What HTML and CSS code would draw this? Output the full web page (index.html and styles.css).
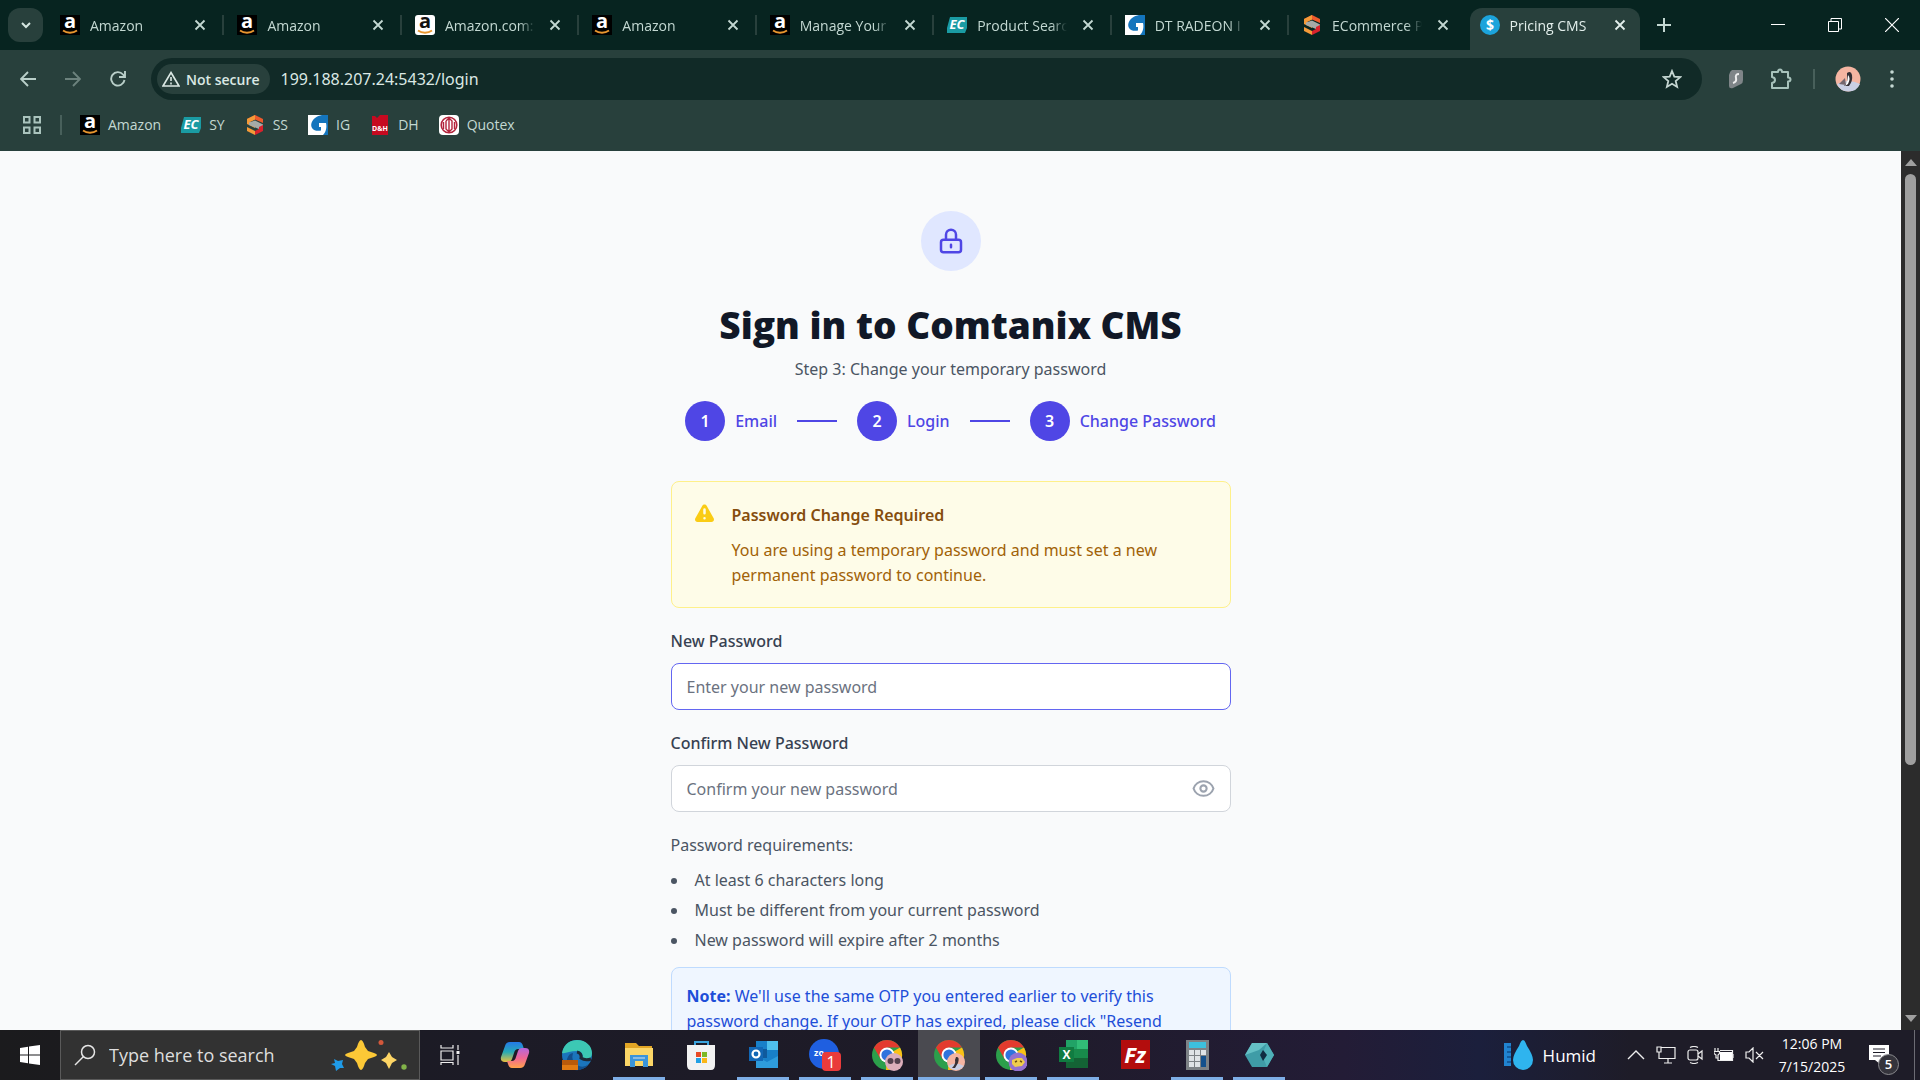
FILE: index.html
```html
<!DOCTYPE html>
<html lang="en">
  <head>
    <meta charset="UTF-8" />
    <meta name="viewport" content="width=device-width, initial-scale=1.0" />
    <title>Pricing CMS</title>
    <link rel="stylesheet" href="styles.css">
  </head>

  <body>
    <!-- shared icons -->
    <svg class="sprite" aria-hidden="true">
      <symbol id="amazon" viewBox="0 0 20 20">
        <rect width="20" height="20" fill="#000" />
        <text x="10" y="13" class="glyph" font-size="20" fill="#fff">a</text>
        <path d="M3 15.500c4 3 10 3 14 0" fill="none" stroke="#e8962e" stroke-width="1.800" />
      </symbol>
      <symbol id="amazon-light" viewBox="0 0 20 20">
        <rect width="20" height="20" rx="3" fill="#fff" />
        <text x="10" y="13" class="glyph" font-size="20" fill="#111">a</text>
        <path d="M3 15.500c4 3 10 3 14 0" fill="none" stroke="#e8962e" stroke-width="1.800" />
      </symbol>
      <symbol id="ec" viewBox="0 0 20 20">
        <path d="M3 2h17v11l-2 5H0V13z" fill="#1a9ba3" />
        <text x="10" y="14" class="glyph" font-size="13" font-style="italic" fill="#fff">EC</text>
      </symbol>
      <symbol id="ss" viewBox="0 0 20 20">
        <path d="M10 0l8 4v4l-8-3.500L2 8V4z" fill="#ee5a2c" />
        <path d="M2 4l8-4v4.500L5 7l5 2.500V13L2 9z" fill="#f59a38" />
        <path d="M4 7.500l6-2 8 4v3l-4 1.500L4 10z" fill="#a5aaa8" />
        <path d="M2 12l8 4v4l-8-4z" fill="#f59a38" />
        <path d="M18 10v6l-8 4v-4l4-2v-2z" fill="#d9222c" />
      </symbol>
      <symbol id="ig" viewBox="0 0 20 20">
        <rect width="20" height="20" fill="#fff" />
        <path d="M20 0v20h-5c3-3 4-8 3-12h-7v4h2v3.500C6 17 2 13 3.500 8 5 3.500 9 1 14 0z" fill="#1475bd" />
      </symbol>
      <symbol id="close" viewBox="0 0 16 16">
        <path d="M3.500 3.500l9 9M12.500 3.500l-9 9" fill="none" stroke="currentColor" stroke-width="1.800" />
      </symbol>
      <symbol id="chrome" viewBox="0 0 32 32">
        <circle cx="16" cy="16" r="15" fill="#2c9f4b" />
        <path d="M16 16L29 8.500A15 15 0 0 1 15 31z" fill="#fbc116" />
        <path d="M3 8.500A15 15 0 0 1 29 8.500H16V16L9.500 20z" fill="#e33b2e" />
        <circle cx="16" cy="16" r="7.500" fill="#fff" />
        <circle cx="16" cy="16" r="5.600" fill="#2f73dd" />
      </symbol>
    </svg>

    <header class="browser">
      <div class="tabstrip">
        <button class="tab-search" aria-label="Search tabs">
          <svg width="12" height="12" viewBox="0 0 12 12"><path d="M2 4l4 4 4-4" fill="none" stroke="#d5e6e1" stroke-width="2" /></svg>
        </button>
        <nav class="tabs" aria-label="Tabs">
          <div class="tab"><svg class="fav"><use href="#amazon" /></svg><span class="tab-title">Amazon</span><button class="tab-close" aria-label="Close tab"><svg><use href="#close" /></svg></button></div>
          <div class="tab"><svg class="fav"><use href="#amazon" /></svg><span class="tab-title">Amazon</span><button class="tab-close" aria-label="Close tab"><svg><use href="#close" /></svg></button></div>
          <div class="tab"><svg class="fav"><use href="#amazon-light" /></svg><span class="tab-title">Amazon.com:</span><button class="tab-close" aria-label="Close tab"><svg><use href="#close" /></svg></button></div>
          <div class="tab"><svg class="fav"><use href="#amazon" /></svg><span class="tab-title">Amazon</span><button class="tab-close" aria-label="Close tab"><svg><use href="#close" /></svg></button></div>
          <div class="tab"><svg class="fav"><use href="#amazon" /></svg><span class="tab-title">Manage Your</span><button class="tab-close" aria-label="Close tab"><svg><use href="#close" /></svg></button></div>
          <div class="tab"><svg class="fav"><use href="#ec" /></svg><span class="tab-title">Product Searc</span><button class="tab-close" aria-label="Close tab"><svg><use href="#close" /></svg></button></div>
          <div class="tab"><svg class="fav"><use href="#ig" /></svg><span class="tab-title">DT RADEON I</span><button class="tab-close" aria-label="Close tab"><svg><use href="#close" /></svg></button></div>
          <div class="tab before-active"><svg class="fav"><use href="#ss" /></svg><span class="tab-title">ECommerce P</span><button class="tab-close" aria-label="Close tab"><svg><use href="#close" /></svg></button></div>
          <div class="tab active">
            <svg class="fav" viewBox="0 0 20 20"><circle cx="10" cy="10" r="10" fill="#1ca4dc" /><text x="10" y="15" class="glyph" font-size="14" fill="#fff">$</text></svg>
            <span class="tab-title">Pricing CMS</span><button class="tab-close" aria-label="Close tab"><svg><use href="#close" /></svg></button>
          </div>
        </nav>
        <button class="new-tab" aria-label="New tab">
          <svg width="14" height="14" viewBox="0 0 14 14"><path d="M7 0v14M0 7h14" stroke="#c3d8d2" stroke-width="2" /></svg>
        </button>
        <div class="window-buttons">
          <button aria-label="Minimize"><svg width="14" height="14" viewBox="0 0 14 14"><path d="M0 6.500h14" stroke="#fff" /></svg></button>
          <button aria-label="Restore"><svg width="14" height="14" viewBox="0 0 14 14"><path d="M.5 3.500h10v10H.5zM3 3.500V.5h10.500v10.500H11" fill="none" stroke="#fff" /></svg></button>
          <button aria-label="Close"><svg width="14" height="14" viewBox="0 0 14 14"><path d="M0 0l14 14M14 0L0 14" stroke="#fff" stroke-width="1.200" /></svg></button>
        </div>
      </div>

      <div class="toolbar">
        <button class="tool" aria-label="Back"><svg width="16" height="16" viewBox="0 0 16 16"><path d="M16 8H2M8 1L1 8l7 7" fill="none" stroke="#b9cfc9" stroke-width="1.900" /></svg></button>
        <button class="tool" aria-label="Forward"><svg width="16" height="16" viewBox="0 0 16 16"><path d="M0 8h14M8 1l7 7-7 7" fill="none" stroke="#6c827d" stroke-width="1.900" /></svg></button>
        <button class="tool" aria-label="Reload"><svg width="16" height="16" viewBox="0 0 16 16"><path d="M14.500 9A6.700 6.700 0 1 1 13 3.500L15 6M15 0v6H9" fill="none" stroke="#b9cfc9" stroke-width="1.900" /></svg></button>
        <div class="address">
          <button class="chip">
            <svg width="18" height="16" viewBox="0 0 18 16"><path d="M9 1.500L17 15H1z" fill="none" stroke="#dbe8e4" stroke-width="1.600" /><path d="M9 6v4M9 11.500v2" stroke="#dbe8e4" stroke-width="1.600" /></svg>
            Not secure
          </button>
          <input class="url" type="text" aria-label="Address" value="199.188.207.24:5432/login">
          <button class="star" aria-label="Bookmark this page"><svg width="20" height="20" viewBox="0 0 20 20"><path d="M10 2l2.300 5.600 6 .5-4.600 3.900 1.400 5.900L10 14.800l-5.100 3.100L6.300 12 1.700 8.100l6-.5z" fill="none" stroke="#c5d6d2" stroke-width="1.800" /></svg></button>
        </div>
        <div class="extensions">
          <button class="tool" aria-label="Extension"><svg width="16" height="20" viewBox="0 0 16 20"><path d="M4 1h9q2 0 2 2v8q0 3-2 4l-8 4q-4 1-4-2V6q1-4 3-5z" fill="#7f8588" /><path d="M11 5q-4 0-3 4 1 4-3 5" fill="none" stroke="#eee" stroke-width="2" /></svg></button>
          <button class="tool" aria-label="Extensions"><svg width="22" height="22" viewBox="0 0 22 22"><path d="M2 4h6q0-2.500 2-2.500T12 4h6v5.500q2.500 0 2.500 2T18 13.500V20H2v-5q3-.5 3-3T2 9z" fill="none" stroke="#a8c3bc" stroke-width="2" stroke-linejoin="round" /></svg></button>
          <span class="divider"></span>
          <button class="tool" aria-label="Profile"><svg width="26" height="26" viewBox="0 0 26 26"><circle cx="13" cy="13" r="12.500" fill="#f5b5a2" /><path d="M2 18q11-6 23 0a12.500 12.500 0 0 1-23 0z" fill="#c9cfe4" /><path d="M12 7q4-3 5 2 1 6-3 11H9q4-3 3-7z" fill="#332f35" /><path d="M13 9q3 3 0 9l-3 2q3-5 3-11z" fill="#fff" /><path d="M4 18l6-6 1 7z" fill="#74666d" /></svg></button>
          <button class="tool" aria-label="Menu"><svg width="6" height="18" viewBox="0 0 6 18"><g fill="#c5d8d3"><circle cx="3" cy="2" r="1.800" /><circle cx="3" cy="9" r="1.800" /><circle cx="3" cy="16" r="1.800" /></g></svg></button>
        </div>
      </div>

      <nav class="bookmarks" aria-label="Bookmarks">
        <svg width="18" height="18" viewBox="0 0 18 18"><path d="M1 1h5.500v5.500H1zM11.500 1H17v5.500h-5.500zM1 11.500h5.500V17H1zM11.500 11.500H17V17h-5.500z" fill="none" stroke="#aac4bd" stroke-width="2" /></svg>
        <span class="divider"></span>
        <a href="#"><svg class="fav"><use href="#amazon" /></svg>Amazon</a>
        <a href="#"><svg class="fav"><use href="#ec" /></svg>SY</a>
        <a href="#"><svg class="fav"><use href="#ss" /></svg>SS</a>
        <a href="#"><svg class="fav"><use href="#ig" /></svg>IG</a>
        <a href="#"><svg class="fav" viewBox="0 0 20 20"><path d="M2 1h3l2 2 3-3h8v20H2z" fill="#c60a20" /><text x="10" y="16" class="glyph" font-size="7" fill="#fff">D&amp;H</text></svg>DH</a>
        <a href="#"><svg class="fav" viewBox="0 0 20 20"><rect width="20" height="20" rx="4" fill="#fff" /><circle cx="10" cy="10" r="7.800" fill="none" stroke="#b3243c" stroke-width="1.600" /><path d="M10 2v16M7 6v8l3 3 3-3V6l-3-3-3 3M4.500 7v7M15.500 7v7" fill="none" stroke="#b3243c" stroke-width="1.400" /></svg>Quotex</a>
      </nav>
    </header>

    <div class="viewport">
      <main class="page">
        <form class="login">
          <div class="lock">
            <svg width="30" height="30" viewBox="0 0 24 24" fill="none" stroke="#4f46e5" stroke-width="2" stroke-linecap="round" stroke-linejoin="round"><path d="M12 15v2m-6 4h12a2 2 0 002-2v-6a2 2 0 00-2-2H6a2 2 0 00-2 2v6a2 2 0 002 2zm10-10V7a4 4 0 00-8 0v4h8z" /></svg>
          </div>
          <h1>Sign in to Comtanix CMS</h1>
          <p class="subtitle">Step 3: Change your temporary password</p>

          <ol class="steps">
            <li><span class="num">1</span>Email</li>
            <li><span class="num">2</span>Login</li>
            <li><span class="num">3</span>Change Password</li>
          </ol>

          <section class="alert">
            <svg width="25" height="25" viewBox="0 0 20 20" fill="#facc15"><path fill-rule="evenodd" d="M8.257 3.099c.765-1.360 2.722-1.360 3.486 0l5.580 9.920c.75 1.334-.213 2.980-1.742 2.980H4.420c-1.530 0-2.493-1.646-1.743-2.980l5.580-9.920zM11 13a1 1 0 11-2 0 1 1 0 012 0zm-1-8a1 1 0 00-1 1v3a1 1 0 002 0V6a1 1 0 00-1-1z" /></svg>
            <div>
              <h2>Password Change Required</h2>
              <p>You are using a temporary password and must set a new permanent password to continue.</p>
            </div>
          </section>

          <div class="field">
            <label for="newPassword">New Password</label>
            <input class="focused" id="newPassword" type="password" placeholder="Enter your new password">
          </div>
          <div class="field">
            <label for="confirmPassword">Confirm New Password</label>
            <input id="confirmPassword" type="password" placeholder="Confirm your new password">
            <button type="button" class="eye" aria-label="Show password">
              <svg width="25" height="25" viewBox="0 0 24 24" fill="none" stroke="#9ca3af" stroke-width="2" stroke-linecap="round" stroke-linejoin="round"><path d="M15 12a3 3 0 11-6 0 3 3 0 016 0z" /><path d="M2.458 12C3.732 7.943 7.523 5 12 5c4.478 0 8.268 2.943 9.542 7-1.274 4.057-5.064 7-9.542 7-4.477 0-8.268-2.943-9.542-7z" /></svg>
            </button>
          </div>

          <div class="requirements">
            <p>Password requirements:</p>
            <ul>
              <li>At least 6 characters long</li>
              <li>Must be different from your current password</li>
              <li>New password will expire after 2 months</li>
            </ul>
          </div>

          <p class="note"><strong>Note:</strong> We'll use the same OTP you entered earlier to verify this password change. If your OTP has expired, please click "Resend</p>
        </form>
      </main>
      <div class="scrollbar">
        <svg width="14" height="7" viewBox="0 0 14 7"><path d="M7 0l6 7H1z" fill="#a0a0a0" /></svg>
        <div class="track"><div class="thumb"></div></div>
        <svg width="14" height="7" viewBox="0 0 14 7"><path d="M1 0h12L7 7z" fill="#a0a0a0" /></svg>
      </div>
    </div>

    <footer class="taskbar">
      <button class="start" aria-label="Start"><svg width="20" height="20" viewBox="0 0 20 20" fill="#fff"><path d="M0 3l8-1.200v7.700H0zM9 1.600L20 0v9.500H9zM0 10.500h8v7.700L0 17zM9 10.500h11V20L9 18.400z" /></svg></button>
      <label class="search">
        <svg width="22" height="22" viewBox="0 0 22 22" fill="none" stroke="#e6e6e6" stroke-width="1.500"><circle cx="14" cy="8" r="6.500" /><path d="M9.500 12.500L1 21" /></svg>
        <input type="text" aria-label="Search" placeholder="Type here to search">
        <svg width="78" height="32" viewBox="0 0 78 32">
          <path d="M30 1q2 0 4 7l3 4 6 2q6 2 0 4l-6 2-3 4q-2 7-4 7t-4-7l-3-4-6-2q-6-2 0-4l6-2 3-4q2-7 4-7z" fill="#fcc836" />
          <path d="M58 13l3 5 5 3-5 3-3 6-3-6-5-3 5-3z" fill="#fdd565" />
          <path d="M3 20l4 2 5-1-1 4 2 4-4 0-4 3-1-5-4-2 4-1z" fill="#1f9be8" />
          <circle cx="50" cy="3.500" r="2.500" fill="#d3583b" /><circle cx="73" cy="28" r="2.700" fill="#82b349" />
        </svg>
      </label>
      <nav class="apps" aria-label="Apps">
        <button class="app" aria-label="Task View"><svg width="20" height="20" viewBox="0 0 20 20" fill="none" stroke="#eee" stroke-width="1.200"><path d="M1 0v3h12V0M1 6h12v9H1zM1 20v-2.500h12V20M18 0v5M18 10v10" /><path d="M16.500 7.500h3" stroke-width="3" /></svg></button>
        <button class="app" aria-label="Copilot"><svg width="32" height="32" viewBox="0 0 32 32">
          <defs>
            <linearGradient id="cpA" x1="0" y1="0" x2="0" y2="1"><stop offset="0" stop-color="#2479e8" /><stop offset=".5" stop-color="#27aab5" /><stop offset="1" stop-color="#eac13d" /></linearGradient>
            <linearGradient id="cpB" x1="0" y1="0" x2="0" y2="1"><stop offset="0" stop-color="#b567dd" /><stop offset=".5" stop-color="#ef6695" /><stop offset="1" stop-color="#ffa34a" /></linearGradient>
          </defs>
          <path d="M11 3h9q3 0 4 4l1 3h-6q-3 0-4 4l-2 6q-1 3-4 3H6q-5 0-4-5L6 7q1-4 5-4z" fill="url(#cpA)" />
          <path d="M21 29h-8q-3 0-4-4l-1-3h5q3 0 4-4l2-6q1-3 4-3h3q5 0 4 5l-4 11q-1 4-5 4z" fill="url(#cpB)" />
        </svg></button>
        <button class="app" aria-label="Edge"><svg width="32" height="32" viewBox="0 0 32 32">
          <circle cx="16" cy="16" r="15" fill="#1b75bc" />
          <path d="M1 14C3 4 10 1 16 1c9 0 15 6 15 13 0 6-5 8-10 6 2-4 0-8-5-8C9 12 4 15 1 14z" fill="#3cc8b4" />
          <path d="M12 14q-3 9 6 13 5 2 10-2-6 7-14 6Q4 29 6 20q2-6 6-6z" fill="#124e8b" />
          <path d="M16 13q5 1 4 6 4 3 10 1" fill="none" stroke="#1d2a38" stroke-width="3" />
          <path d="M1 21h16v10H1z" fill="#e07a12" /><path d="M1 21h16v5H1z" fill="#b85a0b" />
        </svg></button>
        <button class="app open" aria-label="File Explorer"><svg width="32" height="32" viewBox="0 0 32 32">
          <path d="M2 4h11l3 3h13v20H2z" fill="#e2a625" /><path d="M2 9h28v18H2z" fill="#fbd667" /><path d="M7 16h18v12h-5v-6h-8v6H7z" fill="#3b94d9" /><path d="M10 18h12v2H10z" fill="#8bbce2" />
        </svg></button>
        <button class="app" aria-label="Store"><svg width="32" height="32" viewBox="0 0 32 32">
          <path d="M10 8V3h13v5" fill="none" stroke="#3ba3dc" stroke-width="2" /><path d="M2 6h28v20q0 5-4 5H6q-4 0-4-5z" fill="#f2f2f2" /><path d="M11 13h5v5h-5z" fill="#e84a24" /><path d="M17 13h5v5h-5z" fill="#7cb824" /><path d="M11 19h5v5h-5z" fill="#21a0e4" /><path d="M17 19h5v5h-5z" fill="#fab616" />
        </svg></button>
        <button class="app open" aria-label="Outlook"><svg width="32" height="32" viewBox="0 0 32 32">
          <path d="M9 2h22v26H9z" fill="#1880c9" /><path d="M20 2h11v9H20z" fill="#4fc0ec" /><path d="M9 10h11v9H9z" fill="#0f5a9d" /><path d="M9 17l11 6 11-6v12H9z" fill="#2e9cdc" /><path d="M2 8h14v14H2z" fill="#1267b5" />
          <circle cx="9" cy="15" r="3.500" fill="none" stroke="#fff" stroke-width="2.200" />
        </svg></button>
        <button class="app open" aria-label="Zoom"><svg width="32" height="32" viewBox="0 0 32 32">
          <circle cx="15" cy="15" r="15" fill="#1f5fe0" /><text x="10" y="17" class="glyph" font-size="9" fill="#fff">zo</text><rect x="13" y="13" width="19" height="19" rx="4" fill="#ea3b3b" /><text x="22" y="29" class="plain" font-size="16" fill="#fff">1</text>
        </svg></button>
        <button class="app open" aria-label="Chrome"><svg width="32" height="32" viewBox="0 0 32 32"><use href="#chrome" /><circle cx="23" cy="23" r="9" fill="#dcaebb" /><circle cx="19.500" cy="22" r="3" fill="#53404e" /><circle cx="26.500" cy="22" r="3" fill="#53404e" /></svg></button>
        <button class="app open current" aria-label="Chrome"><svg width="32" height="32" viewBox="0 0 32 32"><use href="#chrome" /><circle cx="23" cy="23" r="9" fill="#f5b5a2" /><path d="M15 27q8-5 16 0-8 8-16 0z" fill="#c9cfe4" /><path d="M23 18q4-1 2 6l-3 5h-3q4-4 3-8z" fill="#3a3236" /></svg></button>
        <button class="app open" aria-label="Chrome"><svg width="32" height="32" viewBox="0 0 32 32"><use href="#chrome" /><circle cx="23" cy="23" r="9.500" fill="#9471d0" /><path d="M17 21l5-2 5 0 3 4-3 4-7 1-3-3z" fill="#f0cd4c" /><path d="M20 23l2-1M25 22l2 1" stroke="#6b4c16" stroke-width="1.500" /></svg></button>
        <button class="app open" aria-label="Excel"><svg width="32" height="32" viewBox="0 0 32 32">
          <path d="M9 1h22v28H9z" fill="#188a4b" /><path d="M20 1h11v9H20z" fill="#31bd76" /><path d="M9 1h11v9H9z" fill="#21a366" /><path d="M9 19h22v10H9z" fill="#146335" /><path d="M2 8h15v15H2z" fill="#107c41" /><text x="9.500" y="20" class="glyph" font-size="12" fill="#fff">X</text>
        </svg></button>
        <button class="app" aria-label="FileZilla"><svg width="32" height="32" viewBox="0 0 32 32"><path d="M2 1h29v29H2z" fill="#b30d0d" /><text x="16" y="24" class="glyph" font-size="22" font-style="italic" fill="#fff">Fz</text></svg></button>
        <button class="app open" aria-label="Calculator"><svg width="32" height="32" viewBox="0 0 32 32">
          <path d="M5 1h23v30H5z" fill="#7d8286" /><path d="M8 3h17v6H8z" fill="#3dc0dd" />
          <path d="M8 11h5v5H8zM14 11h5v5h-5zM20 11h5v5h-5zM8 17h5v5H8zM14 17h5v5h-5zM8 23h5v5H8zM14 23h5v5h-5z" fill="#dfe3e6" /><path d="M20 17h5v11h-5z" fill="#14508c" />
        </svg></button>
        <button class="app open" aria-label="Desktop app"><svg width="32" height="32" viewBox="0 0 32 32"><path d="M9 4h15l7 12-7 12H9L2 16z" fill="#3f9ca7" /><path d="M9 4h15l-8 7-14 5z" fill="#65c0c5" /><path d="M24 4l7 12-7 12-5-12z" fill="#4fb0b8" /><path d="M20 11l4 5-4 6-3-6z" fill="#102c42" /></svg></button>
      </nav>
      <div class="tray">
        <button class="weather">
          <svg width="32" height="32" viewBox="0 0 32 32"><path d="M2 4h7v23H2z" fill="#2183cf" /><path d="M5 8h4M5 13h4M5 18h4M5 23h4" stroke="#0f4f8c" stroke-width="1.500" /><path d="M21 1q2 0 4 6 6 9 6 14a10 10 0 0 1-20 0q0-5 6-14 2-6 4-6z" fill="#2fb4ee" /></svg>
          Humid
        </button>
        <svg width="18" height="10" viewBox="0 0 18 10"><path d="M1 9l8-8 8 8" fill="none" stroke="#eee" stroke-width="1.400" /></svg>
        <svg width="20" height="18" viewBox="0 0 20 18" fill="none" stroke="#eee" stroke-width="1.200"><path d="M5 1.500h14v11H3V8M8 17h8M12 13v4M1 1h4v5H1zM3 6v4" /></svg>
        <svg width="16" height="18" viewBox="0 0 16 18" fill="none" stroke="#eee" stroke-width="1.200"><rect x="1" y="4" width="10" height="10" rx="2" /><path d="M11 8l4-3v8l-4-3M3 1.500q4-2 8 0M3 16.500q4 2 8 0" /></svg>
        <svg width="20" height="14" viewBox="0 0 20 14"><path d="M6 4h12v8H6z" fill="#fff" /><path d="M6 2.500h12.500v10H4V10M19 6v4M1 0v3M4 0v3M0 3.500h5.500v2L4 7v3H2V7L0 5.500z" fill="none" stroke="#eee" stroke-width="1.200" /></svg>
        <svg width="20" height="16" viewBox="0 0 20 16" fill="none" stroke="#eee" stroke-width="1.200"><path d="M1 5h3l4-4v14l-4-4H1zM11 5l7 7M18 5l-7 7" /></svg>
        <time class="clock">12:06 PM<br>7/15/2025</time>
        <button class="notify" aria-label="Notifications">
          <svg width="20" height="20" viewBox="0 0 20 20"><path d="M0 0h20v15h-9v4l-5-4H0z" fill="#fff" /><path d="M4 4h12M4 7.500h12M4 11h8" stroke="#1e1c28" stroke-width="1.200" /></svg>
          <span class="badge">5</span>
        </button>
        <span class="peek"></span>
      </div>
    </footer>
  </body>
</html>
```
FILE: styles.css
```css
* {
  box-sizing: border-box;
  margin: 0;
  padding: 0;
}
body {
  display: flex;
  flex-direction: column;
  height: 100vh;
  overflow: hidden;
  font-family: "Noto Sans", "Open Sans", sans-serif;
  font-size: 16px;
  line-height: 25px;
}
button,
input {
  font: inherit;
  color: inherit;
  background: none;
  border: 0;
  outline: 0;
}
svg {
  flex: none;
}
.sprite {
  display: none;
}
.glyph {
  font-family: "Open Sans", sans-serif;
  font-weight: 700;
  text-anchor: middle;
}
.plain {
  font-family: "Open Sans", sans-serif;
  text-anchor: middle;
}

/* browser */
.browser {
  flex: none;
  background: #28403c;
  color: #c3d8d2;
  font-family: "Open Sans", "Noto Sans", sans-serif;
  font-size: 14px;
}
.tabstrip {
  display: flex;
  align-items: center;
  height: 50px;
  padding-left: 8px;
  background: #072420;
}
.tab-search {
  width: 35px;
  height: 34px;
  margin-right: 4px;
  border-radius: 12px;
  background: #28403c;
}
.tabs {
  display: flex;
  flex: 0 1 1598px;
  align-self: stretch;
  min-width: 0;
}
.tab {
  position: relative;
  display: flex;
  flex: 1 1 0;
  align-items: center;
  gap: 10px;
  min-width: 0;
  padding: 0 16px 0 13px;
}
/* separator */
.tab::after {
  content: "";
  position: absolute;
  right: 0;
  top: 15px;
  width: 2px;
  height: 20px;
  background: #28403c;
}
.tab.active::after,
.tab.before-active::after {
  display: none;
}
.tab.active {
  margin: 8px 5px 0 3px;
  padding: 0 12px 8px 10px;
  border-radius: 12px 12px 0 0;
  background: #28403c;
  color: #e3efec;
}
.fav {
  width: 20px;
  height: 20px;
}
.tab-title {
  flex: 1;
  overflow: hidden;
  white-space: nowrap;
  -webkit-mask-image: linear-gradient(90deg, #000 74px, transparent 90px);
  mask-image: linear-gradient(90deg, #000 74px, transparent 90px);
}
.tab-close {
  width: 16px;
  height: 16px;
}
.tab-close svg {
  display: block;
  width: 16px;
  height: 16px;
}
.new-tab {
  display: flex;
  padding: 12px;
}
.window-buttons {
  display: flex;
  margin-left: auto;
}
.window-buttons button {
  display: flex;
  align-items: center;
  justify-content: center;
  width: 57px;
  height: 50px;
}
.toolbar {
  display: flex;
  align-items: center;
  height: 50px;
  padding: 8px 8px 0 5px;
}
.tool {
  display: flex;
  align-items: center;
  justify-content: center;
  width: 45px;
  height: 42px;
}
.address {
  display: flex;
  flex: 1;
  align-items: center;
  height: 42px;
  margin-left: 11px;
  padding: 0 20px 0 6px;
  border-radius: 21px;
  background: #112a27;
}
.chip {
  display: flex;
  align-items: center;
  gap: 6px;
  height: 30px;
  padding: 0 10px 0 5px;
  border-radius: 15px;
  background: #28403c;
  color: #dbe8e4;
  font-weight: 600;
}
.url {
  flex: 1;
  padding-left: 11px;
  color: #dbe8e4;
  font-family: "Noto Sans", sans-serif;
  font-size: 16px;
}
.star {
  display: flex;
}
.extensions {
  display: flex;
  align-items: center;
  padding-left: 11px;
}
.divider {
  width: 2px;
  height: 20px;
  background: #48605b;
}
.extensions .divider {
  margin: 0 10px;
}
.extensions .tool:last-child {
  width: 42px;
  padding-left: 2px;
}
.bookmarks {
  display: flex;
  align-items: center;
  height: 51px;
  padding: 0 24px 2px 23px;
}
.bookmarks .divider {
  margin: 0 18px 0 19px;
}
.bookmarks a {
  display: flex;
  align-items: center;
  gap: 8px;
  margin-right: 20px;
  color: inherit;
  text-decoration: none;
}

/* page */
.viewport {
  display: flex;
  flex: 1;
  min-height: 0;
}
.page {
  flex: 1;
  overflow: hidden;
  padding: 60px 20px;
  background: #f9fafb;
  color: #4b5563;
}
.login {
  max-width: 560px;
  margin: 0 auto;
}
.lock {
  display: flex;
  align-items: center;
  justify-content: center;
  width: 60px;
  height: 60px;
  margin: 0 auto 31px;
  border-radius: 50%;
  background: #e0e7ff;
}
h1 {
  color: #111827;
  font-family: "Open Sans", "Noto Sans", sans-serif;
  font-size: 37px;
  font-weight: 800;
  line-height: 45px;
  text-align: center;
}
.subtitle {
  margin-top: 10px;
  text-align: center;
}
.steps {
  display: flex;
  justify-content: center;
  margin: 19px 0 40px;
  list-style: none;
  color: #4f46e5;
  font-weight: 500;
}
.steps li {
  display: flex;
  align-items: center;
}
.steps li + li::before {
  content: "";
  width: 40px;
  height: 2px;
  margin: 0 20px;
  background: #4f46e5;
}
.num {
  width: 40px;
  margin-right: 10px;
  border-radius: 50%;
  background: #4f46e5;
  color: #fff;
  font-weight: 600;
  line-height: 40px;
  text-align: center;
}
.alert {
  display: flex;
  gap: 15px;
  padding: 20px;
  border: 1px solid #fef08a;
  border-radius: 8px;
  background: #fefce8;
  color: #a16207;
}
.alert div {
  padding-top: 1px;
  margin-bottom: -1px;
}
.alert h2 {
  margin-bottom: 10px;
  color: #854d0e;
  font-size: 16px;
  font-weight: 600;
}
.field {
  position: relative;
  margin-top: 21px;
}
.field label {
  display: block;
  margin-bottom: 9px;
  color: #374151;
  font-weight: 500;
}
.field input {
  display: block;
  width: 100%;
  height: 47px;
  padding: 0 15px;
  border: 1px solid #d1d5db;
  border-radius: 8px;
  background: #fff;
}
.field input::placeholder {
  color: #6b7280;
}
.field .focused {
  border-color: #6366f1;
}
.eye {
  position: absolute;
  right: 15px;
  bottom: 11px;
  display: flex;
}
.requirements {
  margin: 21px 0 14px;
}
.requirements ul {
  margin-top: 10px;
  list-style: none;
}
.requirements li {
  display: flex;
  align-items: center;
  gap: 18px;
}
.requirements li::before {
  content: "";
  width: 6px;
  height: 6px;
  border-radius: 50%;
  background: #4b5563;
}
.requirements li + li {
  margin-top: 5px;
}
.note {
  padding: 16px 15px 15px;
  border: 1px solid #bfdbfe;
  border-radius: 8px;
  background: #eff6ff;
  color: #1d4ed8;
}
.scrollbar {
  display: flex;
  flex-direction: column;
  align-items: center;
  gap: 8px;
  width: 19px;
  padding: 8px 0;
  background: #2c2c2c;
}
.track {
  flex: 1;
  width: 11px;
}
.thumb {
  height: 71%;
  border-radius: 6px;
  background: #9f9f9f;
}

/* taskbar */
.taskbar {
  display: flex;
  flex: none;
  height: 50px;
  background: linear-gradient(90deg, #1b1b1d, #1c1b26 25%, #1e1b28 50%, #231c36 70%, #1b1f3c 77%, #1e1c28 85%);
  color: #fff;
  font-family: "Open Sans", "Noto Sans", sans-serif;
}
.start {
  display: flex;
  align-items: center;
  justify-content: center;
  width: 60px;
}
.search {
  display: flex;
  align-items: center;
  gap: 13px;
  width: 360px;
  padding: 0 10px 0 13px;
  border: 1px solid #5a5a5a;
  background: #323232;
}
.search input {
  flex: 1;
  min-width: 0;
  font-size: 18px;
}
.search input::placeholder {
  color: #dedede;
}
.apps {
  display: flex;
}
.app {
  display: flex;
  align-items: center;
  justify-content: center;
  width: 62px;
  border: solid transparent;
  border-width: 0 5px;
}
.app:first-child {
  width: 64px;
  padding-right: 4px;
}
.app.open {
  background: linear-gradient(#7eaee6, #7eaee6) center bottom / 100% 3px no-repeat padding-box;
}
.app.current {
  border-width: 0;
  background-color: #4a4a50;
}
.tray {
  display: flex;
  align-items: center;
  gap: 11px;
  margin-left: auto;
}
.weather {
  display: flex;
  align-items: center;
  gap: 9px;
  margin-right: 20px;
  font-size: 17px;
}
.clock {
  width: 80px;
  margin: 0 6px 0 -4px;
  font-size: 14px;
  line-height: 23px;
  text-align: center;
}
.notify {
  position: relative;
  display: flex;
  margin-right: 14px;
}
.badge {
  position: absolute;
  left: 9px;
  top: 9px;
  width: 21px;
  height: 21px;
  border: 1px solid #8a8a8e;
  border-radius: 50%;
  background: #35343c;
  font-size: 13px;
  font-weight: 600;
  line-height: 19px;
  text-align: center;
}
.peek {
  align-self: stretch;
  width: 6px;
  border-left: 1px solid #6c6b74;
}
```
